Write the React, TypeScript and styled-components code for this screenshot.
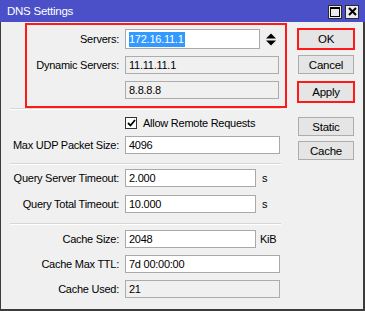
import * as React from 'react';
import styled, { createGlobalStyle } from 'styled-components';

const GlobalStyle = createGlobalStyle`
  html, body {
    margin: 0;
    padding: 0;
    background: #ffffff;
  }
  body {
    font-family: "Liberation Sans", Arial, sans-serif;
    font-size: 11px;
    letter-spacing: -0.25px;
    color: #000;
  }
`;

const Window = styled.div`
  width: 365px;
  height: 311px;
  display: flex;
  flex-direction: column;
`;

const TitleBar = styled.div`
  flex: 0 0 22px;
  display: flex;
  align-items: center;
  justify-content: space-between;
  padding: 0 6px 0 7px;
  background: #4b50c9;
  color: #ffffff;
  font-size: 11.5px;
`;

const TitleButtons = styled.div`
  display: flex;
  gap: 3px;
  margin-top: 1px;
`;

const TitleButton = styled.div`
  width: 14px;
  height: 14px;
  box-sizing: border-box;
  border: 1px solid #2b2b2b;
  background: #ececec;
  display: flex;
  align-items: center;
  justify-content: center;
`;

const Body = styled.div`
  flex: 1 1 auto;
  display: flex;
  background: #f0f0f0;
  border-left: 1px solid #3c3c3c;
  border-right: 2px solid #3c3c3c;
  border-bottom: 2px solid #3c3c3c;
`;

const Main = styled.div`
  flex: 0 0 296px;
  display: flex;
  flex-direction: column;
  padding-top: 1px;
`;

const Highlight = styled.div`
  width: 262px;
  margin-left: 24px;
  box-sizing: border-box;
  border: 2px solid #ff1a1a;
  padding: 4px 0 7px;
  display: flex;
  flex-direction: column;
  gap: 7px;
`;

const Section = styled.div<{ $pad: string; $gap: number }>`
  display: flex;
  flex-direction: column;
  padding: ${(p) => p.$pad};
  gap: ${(p) => p.$gap}px;
`;

const Separator = styled.div`
  margin-left: 9px;
  width: 271px;
  border-top: 1px solid #d6d6d6;
  border-bottom: 1px solid #ffffff;
`;

const Row = styled.div`
  display: flex;
  align-items: center;
  gap: 6px;
`;

const Label = styled.div<{ $w: number }>`
  flex: 0 0 ${(p) => p.$w}px;
  text-align: right;
  white-space: nowrap;
`;

const Field = styled.div<{ $w: number; $h?: number; $disabled?: boolean }>`
  width: ${(p) => p.$w}px;
  height: ${(p) => p.$h ?? 18}px;
  box-sizing: border-box;
  border: 1px solid ${(p) => (p.$disabled ? '#acacac' : '#a9a9a9')};
  background: ${(p) => (p.$disabled ? '#f0f0f0' : '#ffffff')};
  display: flex;
  align-items: center;
  padding-left: 3px;
  white-space: nowrap;
`;

const Selected = styled.span`
  background: #3399ff;
  color: #ffffff;
  line-height: 15px;
  padding-right: 1px;
`;

const Unit = styled.span<{ $gap: number }>`
  margin-left: ${(p) => p.$gap - 6}px;
`;

const Spinner = styled.div`
  display: flex;
  align-items: center;
`;

const CheckRow = styled.div`
  display: flex;
  align-items: center;
  gap: 6px;
  margin-left: 124px;
  height: 13px;
`;

const CheckBox = styled.div`
  width: 12px;
  height: 12px;
  box-sizing: border-box;
  border: 1px solid #333333;
  background: #ffffff;
  display: flex;
  align-items: center;
  justify-content: center;
`;

const Buttons = styled.div`
  flex: 0 0 auto;
  display: flex;
  flex-direction: column;
  align-items: flex-start;
  padding: 6px 0 0 1px;
`;

const Button = styled.div<{ $highlight?: boolean; $mt: number }>`
  box-sizing: border-box;
  width: ${(p) => (p.$highlight ? 58 : 56)}px;
  height: ${(p) => (p.$highlight ? 22 : 19)}px;
  margin-top: ${(p) => p.$mt}px;
  margin-left: ${(p) => (p.$highlight ? -1 : 0)}px;
  border: ${(p) => (p.$highlight ? '2px solid #ff1a1a' : '1px solid #adadad')};
  background: #e5e5e5;
  display: flex;
  align-items: center;
  justify-content: center;
  font-size: 11.5px;
`;

function SpinIcon() {
  return (
    <svg width="10" height="13" viewBox="0 0 10 13">
      <path d="M0 5.5 L5 0.5 L10 5.5 Z" fill="#000" />
      <path d="M0 7.5 L5 12.5 L10 7.5 Z" fill="#000" />
    </svg>
  );
}

export default function App() {
  return (
    <>
      <GlobalStyle />
      <Window>
        <TitleBar>
          <span>DNS Settings</span>
          <TitleButtons>
            <TitleButton>
              <svg width="10" height="10" viewBox="0 0 10 10">
                <rect x="0.5" y="0.5" width="9" height="9" fill="none" stroke="#000" />
                <rect x="0" y="0" width="10" height="2" fill="#000" />
              </svg>
            </TitleButton>
            <TitleButton>
              <svg width="9" height="9" viewBox="0 0 9 9">
                <path d="M1 1 L8 8 M8 1 L1 8" stroke="#000" strokeWidth="2" />
              </svg>
            </TitleButton>
          </TitleButtons>
        </TitleBar>
        <Body>
          <Main>
            <Highlight>
              <Row>
                <Label $w={92}>Servers:</Label>
                <Field $w={135} $h={20}>
                  <Selected>172.16.11.1</Selected>
                </Field>
                <Spinner>
                  <SpinIcon />
                </Spinner>
              </Row>
              <Row>
                <Label $w={92}>Dynamic Servers:</Label>
                <Field $w={154} $disabled>11.11.11.1</Field>
              </Row>
              <Row>
                <Label $w={92} />
                <Field $w={154} $disabled>8.8.8.8</Field>
              </Row>
            </Highlight>
            <Separator />
            <Section $pad="6px 0 9px" $gap={7}>
              <CheckRow>
                <CheckBox>
                  <svg width="9" height="8" viewBox="0 0 9 8">
                    <path d="M1 4 L3.5 6.5 L8 1" fill="none" stroke="#000" strokeWidth="1.8" />
                  </svg>
                </CheckBox>
                <span>Allow Remote Requests</span>
              </CheckRow>
              <Row>
                <Label $w={118}>Max UDP Packet Size:</Label>
                <Field $w={155}>4096</Field>
              </Row>
            </Section>
            <Separator />
            <Section $pad="4px 0 10px" $gap={8}>
              <Row>
                <Label $w={118}>Query Server Timeout:</Label>
                <Field $w={131}>2.000</Field>
                <Unit $gap={6}>s</Unit>
              </Row>
              <Row>
                <Label $w={118}>Query Total Timeout:</Label>
                <Field $w={131}>10.000</Field>
                <Unit $gap={6}>s</Unit>
              </Row>
            </Section>
            <Separator />
            <Section $pad="5px 0 0" $gap={7}>
              <Row>
                <Label $w={118}>Cache Size:</Label>
                <Field $w={131}>2048</Field>
                <Unit $gap={4}>KiB</Unit>
              </Row>
              <Row>
                <Label $w={118}>Cache Max TTL:</Label>
                <Field $w={155}>7d 00:00:00</Field>
              </Row>
              <Row>
                <Label $w={118}>Cache Used:</Label>
                <Field $w={155} $disabled>21</Field>
              </Row>
            </Section>
          </Main>
          <Buttons>
            <Button $highlight $mt={0}>OK</Button>
            <Button $mt={5}>Cancel</Button>
            <Button $highlight $mt={7}>Apply</Button>
            <Button $mt={14}>Static</Button>
            <Button $mt={5}>Cache</Button>
          </Buttons>
        </Body>
      </Window>
    </>
  );
}
